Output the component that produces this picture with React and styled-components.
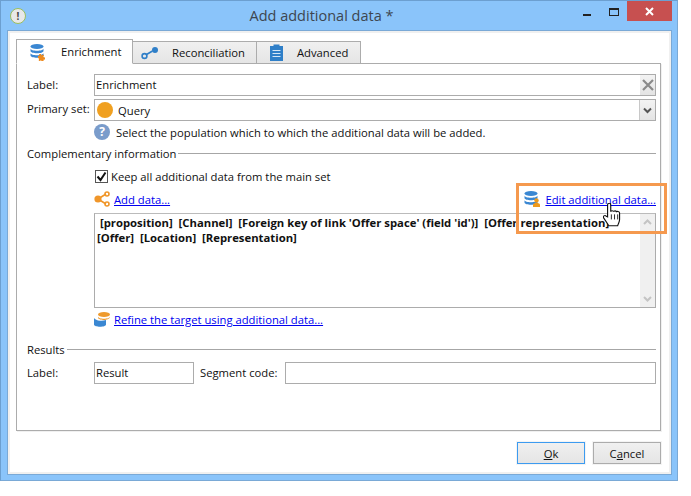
import React from "react";
import styled, { createGlobalStyle } from "styled-components";

const Global = createGlobalStyle`
  html, body { margin: 0; padding: 0; background: #fff; }
  body { font-family: "Open Sans", "Noto Sans", sans-serif; font-size: 11.25px; color: #111; }
`;
const Page = styled.div`width: 691px; height: 496px; overflow: hidden; background: #fff;`;
const Win = styled.div`
  position: relative; box-sizing: border-box; width: 678px; height: 481px;
  background: #8ac4fa; border: 1px solid #6c9fd0; border-bottom-color: #7aa9d6; border-right-color: #7aa9d6;
  display: flex; flex-direction: column; padding: 0 6px 6px 7px;
`;
const TitleBar = styled.div`height: 30px; flex: none; display: flex; align-items: center; position: relative;`;
const AppIcon = styled.div`
  width: 14px; height: 14px; border-radius: 50%; border: 1px solid #9bbf5e; background: #e8e8e8;
  margin-left: 2px; display: flex; align-items: center; justify-content: center;
  font-size: 10px; line-height: 1; color: #444; font-weight: 700;
`;
const Title = styled.div`
  position: absolute; left: 0; right: 0; top: 5px; text-align: center; font-size: 14.5px; line-height: 20px;
  color: #3d4650; padding-right: 36px;
`;
const Controls = styled.div`position: absolute; right: -1px; top: 0; display: flex; align-items: flex-start;`;
const CtlGlyph = styled.div`width: ${p => p.$w}px; height: 21px; position: relative;`;
const MinBar = styled.div`position: absolute; left: 8px; top: 13px; width: 8px; height: 2px; background: #222;`;
const MaxBox = styled.div`position: absolute; left: 8px; top: 7px; box-sizing: border-box; width: 10px; height: 8px; border: 1px solid #222; border-top-width: 2px;`;
const CloseBtn = styled.div`width: 45px; height: 20px; margin-top: 0; background: #c75050; display: flex; align-items: center; justify-content: center;`;
const Client = styled.div`
  flex: 1; background: #fff; border: 2px solid #f0f0f0; box-shadow: 0 0 0 1px #7aa9d6;
  display: flex; flex-direction: column; padding: 6px 7px 6px 6px; min-height: 0;
`;
const Tabs = styled.div`display: flex; height: 25px; flex: none; align-items: flex-end; position: relative; z-index: 1; margin-bottom: -1px;`;
const Tab = styled.div`
  box-sizing: border-box; width: ${p => p.$w}px; height: ${p => p.$active ? 25 : 23}px;
  display: flex; align-items: center; gap: ${p => p.$gap}px; padding-left: ${p => p.$pad}px;
  border: 1px solid #acacac; border-left-width: ${p => p.$active ? 1 : 0}px;
  border-bottom-color: ${p => p.$active ? "#fff" : "#acacac"};
  background: ${p => p.$active ? "#fff" : "linear-gradient(#f0f0f0, #e5e5e5)"};
  line-height: 16px;
`;
const Panel = styled.div`
  box-sizing: border-box; width: 645px; height: 368px; flex: none; border: 1px solid #acacac; box-shadow: 1px 1px 0 #f0f0f0;
  padding: 10px 4px 0 10px; display: flex; flex-direction: column; background: #fff;
`;
const FormRow = styled.div`display: flex; align-items: center; height: 22px; margin-top: ${p => p.$mt || 0}px;`;
const RowLabel = styled.div`width: 67px; flex: none; margin-top: ${p => p.$up ? -3 : -1}px;`;
const Field = styled.div`
  box-sizing: border-box; height: 22px; flex: ${p => p.$w ? "none" : 1}; width: ${p => p.$w ? p.$w + "px" : "auto"};
  border: 1px solid #acacac; display: flex; align-items: center; background: #fff; padding: 0 0 ${p => p.$flat ? 0 : 2}px 1px; position: relative;
`;
const Dot = styled.div`width: 16px; height: 16px; border-radius: 50%; background: #f0a020; margin: 0 5px 0 1px;`;
const FieldBtn = styled.div`
  position: absolute; right: 0; top: 0; bottom: 0; width: 15px; background: linear-gradient(#f3f3f3, #e4e4e4);
  display: flex; align-items: center; justify-content: center; border-left: ${p => p.$line ? "1px solid #c8c8c8" : "0"};
`;
const Indented = styled.div`margin-left: 67px; display: flex; align-items: center;`;
const HelpRow = styled(Indented)`height: 16px; margin-top: 3px; gap: 6px;`;
const HelpDot = styled.div`
  width: 16px; height: 16px; border-radius: 50%; background: #7a9ccb; color: #fff; font-weight: 700;
  font-size: 12px; line-height: 16px; text-align: center;
`;
const Legend = styled.div`display: flex; align-items: center; height: 16px; margin-top: ${p => p.$mt}px; gap: 2px;`;
const Rule = styled.div`flex: 1; height: 1px; background: #a6a6a6;`;
const CheckRow = styled(Indented)`height: 16px; margin-top: 7px; padding-left: 1px; gap: 3px;`;
const CheckBox = styled.div`
  box-sizing: border-box; width: 13px; height: 13px; border: 1px solid #555; background: #fff;
  display: flex; align-items: center; justify-content: center;
`;
const LinkBar = styled(Indented)`height: 18px; margin-top: 6px; justify-content: space-between;`;
const LinkGroup = styled.div`display: flex; align-items: center; gap: ${p => p.$gap}px;`;
const Link = styled.a`color: #0000f0; text-decoration: underline; cursor: pointer;`;
const TextArea = styled.div`
  box-sizing: border-box; margin: 5px 0 0 67px; height: 95px; flex: none; border: 1px solid #acacac; border-top: 1px solid #bbb;
  font-weight: 700; line-height: 15px; font-size: 11.3px; padding: 1px 16px 0 2px; position: relative; white-space: pre;
`;
const Scroll = styled.div`
  position: absolute; right: 0; top: 0; bottom: 0; width: 15px; background: #f0f0f0;
  display: flex; flex-direction: column; justify-content: space-between; align-items: center; padding: 5px 0;
  box-sizing: border-box;
`;
const RefineRow = styled(Indented)`height: 18px; margin-top: 2px; gap: 4px;`;
const InlineLabel = styled.div`margin: -1px 0 0 6px; width: 85px; flex: none;`;
const Footer = styled.div`display: flex; justify-content: flex-end; gap: 8px; margin-top: 11px; padding-right: 1px;`;
const Btn = styled.div`
  box-sizing: border-box; width: 68px; height: 22px; display: flex; align-items: center; justify-content: center;
  background: linear-gradient(#f0f0f0, #e5e5e5); border: 1px solid ${p => p.$def ? "#3c9bf0" : "#acacac"};
  box-shadow: 0 0 0 1px #f4f4f4;
`;
const U = styled.span`text-decoration: underline;`;
const Highlight = styled.div`
  position: absolute; left: 515px; top: 182px; width: 151px; height: 51px; box-sizing: border-box;
  border: 3px solid #f5994e; pointer-events: none;
`;
const Cursor = styled.svg`position: absolute; left: 602px; top: 202px;`;

const DbIcon = ({ badge }) => (
  <svg width="18" height="18" viewBox="0 0 18 18">
    <ellipse cx="8" cy="3.5" rx="6.5" ry="2.5" fill="#3a87d2" />
    <path d="M1.5 5.500c0 3 13 3 13 0v2.500c0 3-13 3-13 0z" fill="#3a87d2" />
    <path d="M1.5 10c0 3 13 3 13 0v2.500c0 3-13 3-13 0z" fill="#3a87d2" />
    {badge === "gear" && <path d="M10 11h2l.6 1.400 1.400-.8 1 1-.8 1.400 1.800.5v2l-1.600.3.400 1.700h-2l-.8-1.200-1.400.9-1-1 .6-1.400L9 15v-2l1.600-.3z" fill="#ee8a1d" />}
    {badge === "user" && <g fill="#ee9a1d"><circle cx="13.5" cy="10.5" r="2.2" /><path d="M10 17v-2.200c0-1.300 1.500-1.800 3.500-1.800s3.500.5 3.500 1.800V17z" /></g>}
  </svg>
);

export default function App() {
  return (
    <Page>
      <Global />
      <Win>
        <TitleBar>
          <AppIcon>!</AppIcon>
          <Title>Add additional data *</Title>
          <Controls>
            <CtlGlyph $w={26}><MinBar /></CtlGlyph>
            <CtlGlyph $w={26}><MaxBox /></CtlGlyph>
            <CloseBtn>
              <svg width="9" height="9" viewBox="0 0 9 9"><path d="M1 1l7 7M8 1l-7 7" stroke="#fff" strokeWidth="2" /></svg>
            </CloseBtn>
          </Controls>
        </TitleBar>
        <Client>
          <Tabs>
            <Tab $w={117} $active $gap={14} $pad={12}><DbIcon badge="gear" />Enrichment</Tab>
            <Tab $w={124} $gap={13} $pad={8}>
              <svg width="18" height="14" viewBox="0 0 18 14"><circle cx="3.5" cy="10" r="2.4" fill="none" stroke="#2f7fc8" strokeWidth="1.6" /><path d="M5.500 8.500l6-3.500" stroke="#2f7fc8" strokeWidth="1.6" /><circle cx="14" cy="4" r="3" fill="#2f7fc8" /></svg>
              Reconciliation
            </Tab>
            <Tab $w={104} $gap={14} $pad={13}>
              <svg width="13" height="17" viewBox="0 0 13 17"><path d="M0 2h3.500V0.500h6V2H13v15H0z" fill="#2f7fc8" /><path d="M2.500 6.500h8M2.500 9.500h8M2.500 12.500h8" stroke="#d5e6f6" strokeWidth="1" /></svg>
              Advanced
            </Tab>
          </Tabs>
          <Panel>
            <FormRow>
              <RowLabel>Label:</RowLabel>
              <Field>
                Enrichment
                <FieldBtn>
                  <svg width="12" height="12" viewBox="0 0 12 12"><path d="M1 1l10 10M11 1L1 11" stroke="#8a8a8a" strokeWidth="2.2" /></svg>
                </FieldBtn>
              </Field>
            </FormRow>
            <FormRow $mt={3}>
              <RowLabel $up>Primary set:</RowLabel>
              <Field $flat>
                <Dot />Query
                <FieldBtn $line>
                  <svg width="9" height="7" viewBox="0 0 9 7"><path d="M1 1.500l3.500 3.500L8 1.500" fill="none" stroke="#555" strokeWidth="2" /></svg>
                </FieldBtn>
              </Field>
            </FormRow>
            <HelpRow>
              <HelpDot>?</HelpDot>
              <span>Select the population which to which the additional data will be added.</span>
            </HelpRow>
            <Legend $mt={5}>Complementary information<Rule /></Legend>
            <CheckRow>
              <CheckBox>
                <svg width="11" height="11" viewBox="0 0 11 11"><path d="M1.500 5.500l3 3.500 5-7.500" fill="none" stroke="#111" strokeWidth="2" /></svg>
              </CheckBox>
              Keep all additional data from the main set
            </CheckRow>
            <LinkBar>
              <LinkGroup $gap={3}>
                <svg width="17" height="16" viewBox="0 0 17 16"><g fill="none" stroke="#f0962a" strokeWidth="1.6"><path d="M4 8l8-5M4 8l8 5" /><circle cx="13" cy="3" r="2" /><circle cx="13" cy="13" r="2" /></g><circle cx="4" cy="8" r="3.6" fill="#f0962a" /></svg>
                <Link>Add data...</Link>
              </LinkGroup>
              <LinkGroup $gap={4}>
                <DbIcon badge="user" />
                <Link>Edit additional data...</Link>
              </LinkGroup>
            </LinkBar>
            <TextArea>
              {" [proposition]  [Channel]  [Foreign key of link 'Offer space' (field 'id')]  [Offer representation]\n[Offer]  [Location]  [Representation]"}
              <Scroll>
                <svg width="9" height="6" viewBox="0 0 9 6"><path d="M1 5l3.500-3.500L8 5" fill="none" stroke="#c4c4c4" strokeWidth="2" /></svg>
                <svg width="9" height="6" viewBox="0 0 9 6"><path d="M1 1l3.500 3.500L8 1" fill="none" stroke="#c4c4c4" strokeWidth="2" /></svg>
              </Scroll>
            </TextArea>
            <RefineRow>
              <svg width="16" height="16" viewBox="0 0 16 16"><ellipse cx="10" cy="3.500" rx="6" ry="2.500" fill="#ee9a2d" /><path d="M4 5.500c0 3 12 3 12 0V6c0 2-4 3-6 3s-6-1-6-2z" fill="#ee9a2d" /><path d="M0 7c1 1.500 3 2.500 6 2.700 2 .2 4 0 6-.7v4.500c0 3-12 3-12 0z" fill="#3a87d2" /></svg>
              <Link>Refine the target using additional data...</Link>
            </RefineRow>
            <Legend $mt={13}>Results<Rule /></Legend>
            <FormRow $mt={5}>
              <RowLabel>Label:</RowLabel>
              <Field $w={100}>Result</Field>
              <InlineLabel>Segment code:</InlineLabel>
              <Field />
            </FormRow>
          </Panel>
          <Footer>
            <Btn $def><span><U>O</U>k</span></Btn>
            <Btn><span>C<U>a</U>ncel</span></Btn>
          </Footer>
        </Client>
        <Highlight />
        <Cursor width="18" height="24" viewBox="1.5 1 14 19">
          <path d="M5 12V2.500c0-1.800 2.500-1.800 2.500 0V8c0-1.200 2.300-1.200 2.300 0 0-1 2.300-1 2.300.3 0-1 2.400-.8 2.400.7v5c0 2-1 3-1.500 5H6l-4-6c-1-1.500.8-2.800 2-1.500z" fill="#fff" stroke="#111" strokeWidth="0.9" />
          <path d="M8 10v4M10.500 10v4M13 10v4" stroke="#111" strokeWidth="0.7" />
        </Cursor>
      </Win>
    </Page>
  );
}
